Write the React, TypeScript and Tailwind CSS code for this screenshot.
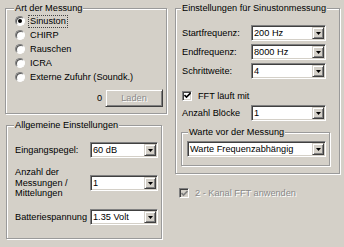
import React from 'react';

const raised =
  'bg-[#d4d0c8] border border-t-[#d4d0c8] border-l-[#d4d0c8] border-r-[#404040] border-b-[#404040] shadow-[inset_1px_1px_0_#fff,inset_-1px_-1px_0_#808080]';
const sunken =
  'border border-t-[#808080] border-l-[#808080] border-r-white border-b-white shadow-[inset_1px_1px_0_#404040,inset_-1px_-1px_0_#d4d0c8]';

const Group: React.FC<{ title: string; titleLeft: string; className: string; children?: React.ReactNode }> = ({
  title, titleLeft, className, children,
}) => (
  <div className={`relative border border-[#9a9a9a] shadow-[inset_1px_1px_0_#fff,1px_1px_0_#fff] ${className}`}>
    <span className={`absolute top-[-7px] ${titleLeft} px-[1px] leading-[12px] bg-[#d4d0c8] whitespace-nowrap`}>{title}</span>
    {children}
  </div>
);

const Combo: React.FC<{ value: string; className: string }> = ({ value, className }) => (
  <div className={`flex h-[16px] bg-white p-[1px] ${sunken} ${className}`}>
    <span className="flex-1 pl-[1px] leading-[12px] whitespace-nowrap overflow-hidden">{value}</span>
    <span className={`w-[12px] h-[12px] flex items-center justify-center ${raised}`}>
      <svg width="5" height="3" viewBox="0 0 5 3"><polygon points="0,0 5,0 2.5,3" fill="#000" /></svg>
    </span>
  </div>
);

const Radio: React.FC<{ label: string; checked?: boolean }> = ({ label, checked }) => (
  <div className="flex items-center h-[14px]">
    <span className="w-[10px] h-[10px] rounded-full bg-white border border-t-[#808080] border-l-[#808080] border-r-white border-b-white shadow-[inset_1px_1px_0_#555] flex items-center justify-center">
      {checked && <span className="w-[4px] h-[4px] rounded-full bg-black" />}
    </span>
    <span className={`ml-[3px] px-[1px] leading-[11px] border border-dotted ${checked ? 'border-[#444]' : 'border-transparent'}`}>{label}</span>
  </div>
);

const Check: React.FC<{ label: string; disabled?: boolean; className: string }> = ({ label, disabled, className }) => (
  <div className={`flex items-center ${className}`}>
    <span className={`w-[10px] h-[10px] flex items-center justify-center ${sunken} ${disabled ? 'bg-[#d4d0c8]' : 'bg-white'}`}>
      <svg width="7" height="7" viewBox="0 0 7 7">
        <path d="M0.5 3 L2.5 5 L6.5 1" stroke={disabled ? '#808080' : '#000'} strokeWidth="1.6" fill="none" />
      </svg>
    </span>
    <span className={`ml-[6px] leading-[12px] ${disabled ? 'text-[#8a8a8a] [text-shadow:1px_1px_0_#fff]' : ''}`}>{label}</span>
  </div>
);

export default function App() {
  return (
    <div
      className="w-[344px] h-[247px] bg-[#d4d0c8] text-black text-[9.2px] flex items-start pt-[8px] overflow-hidden"
      style={{ fontFamily: '"Liberation Sans", Arial, sans-serif' }}
    >
      {/* left column */}
      <div className="ml-[5px] w-[162px] flex flex-col">
        <Group title="Art der Messung" titleLeft="left-[8px]" className="h-[106px] pt-[5px] pl-[9px]">
          <Radio label="Sinuston" checked />
          <Radio label="CHIRP" />
          <Radio label="Rauschen" />
          <Radio label="ICRA" />
          <Radio label="Externe Zufuhr (Soundk.)" />
          <div className="flex items-center justify-end gap-[3px] mt-[5px] pr-[3px]">
            <span className="leading-[12px]">0</span>
            <button
              disabled
              className={`w-[58px] h-[18px] text-[#8a8a8a] [text-shadow:1px_1px_0_#fff] leading-[12px] ${raised}`}
            >
              Laden
            </button>
          </div>
        </Group>

        <Group title="Allgemeine Einstellungen" titleLeft="left-[7px]" className="ml-[1px] mt-[11px] w-[156px] h-[114px] pt-[16px] pl-[8px]">
          <div className="flex items-center">
            <span className="w-[75px] leading-[12px]">Eingangspegel:</span>
            <Combo value="60 dB" className="w-[68px]" />
          </div>
          <div className="flex items-center mt-[9px] h-[32px]">
            <span className="w-[75px] leading-[10.5px]">Anzahl der<br />Messungen /<br />Mittelungen</span>
            <Combo value="1" className="w-[68px]" />
          </div>
          <div className="flex items-center mt-[10px]">
            <span className="w-[75px] leading-[12px] whitespace-nowrap">Batteriespannung</span>
            <Combo value="1.35 Volt" className="w-[68px]" />
          </div>
        </Group>
      </div>

      {/* right column */}
      <div className="ml-[8px] w-[165px] flex flex-col">
        <Group title="Einstellungen für Sinustonmessung" titleLeft="left-[5px]" className="h-[166px] pt-[16px] pl-[5px]">
          <div className="flex items-center">
            <span className="w-[70px] pl-[1px] leading-[12px]">Startfrequenz:</span>
            <Combo value="200 Hz" className="w-[75px]" />
          </div>
          <div className="flex items-center mt-[3px]">
            <span className="w-[70px] pl-[1px] leading-[12px]">Endfrequenz:</span>
            <Combo value="8000 Hz" className="w-[75px]" />
          </div>
          <div className="flex items-center mt-[3px]">
            <span className="w-[70px] pl-[1px] leading-[12px]">Schrittweite:</span>
            <Combo value="4" className="w-[75px]" />
          </div>
          <Check label="FFT läuft mit" className="h-[15px] mt-[9px] pl-[1px]" />
          <div className="flex items-center mt-[2px]">
            <span className="w-[70px] pl-[1px] leading-[12px] whitespace-nowrap">Anzahl Blöcke</span>
            <Combo value="1" className="w-[75px]" />
          </div>
          <Group title="Warte vor der Messung" titleLeft="left-[6px]" className="mt-[11px] w-[149px] h-[34px] pt-[8px] pl-[5px]">
            <Combo value="Warte Frequenzabhängig" className="w-[139px]" />
          </Group>
        </Group>
        <Check label="2 - Kanal FFT anwenden" disabled className="h-[10px] mt-[14px] pl-[4px]" />
      </div>
    </div>
  );
}
